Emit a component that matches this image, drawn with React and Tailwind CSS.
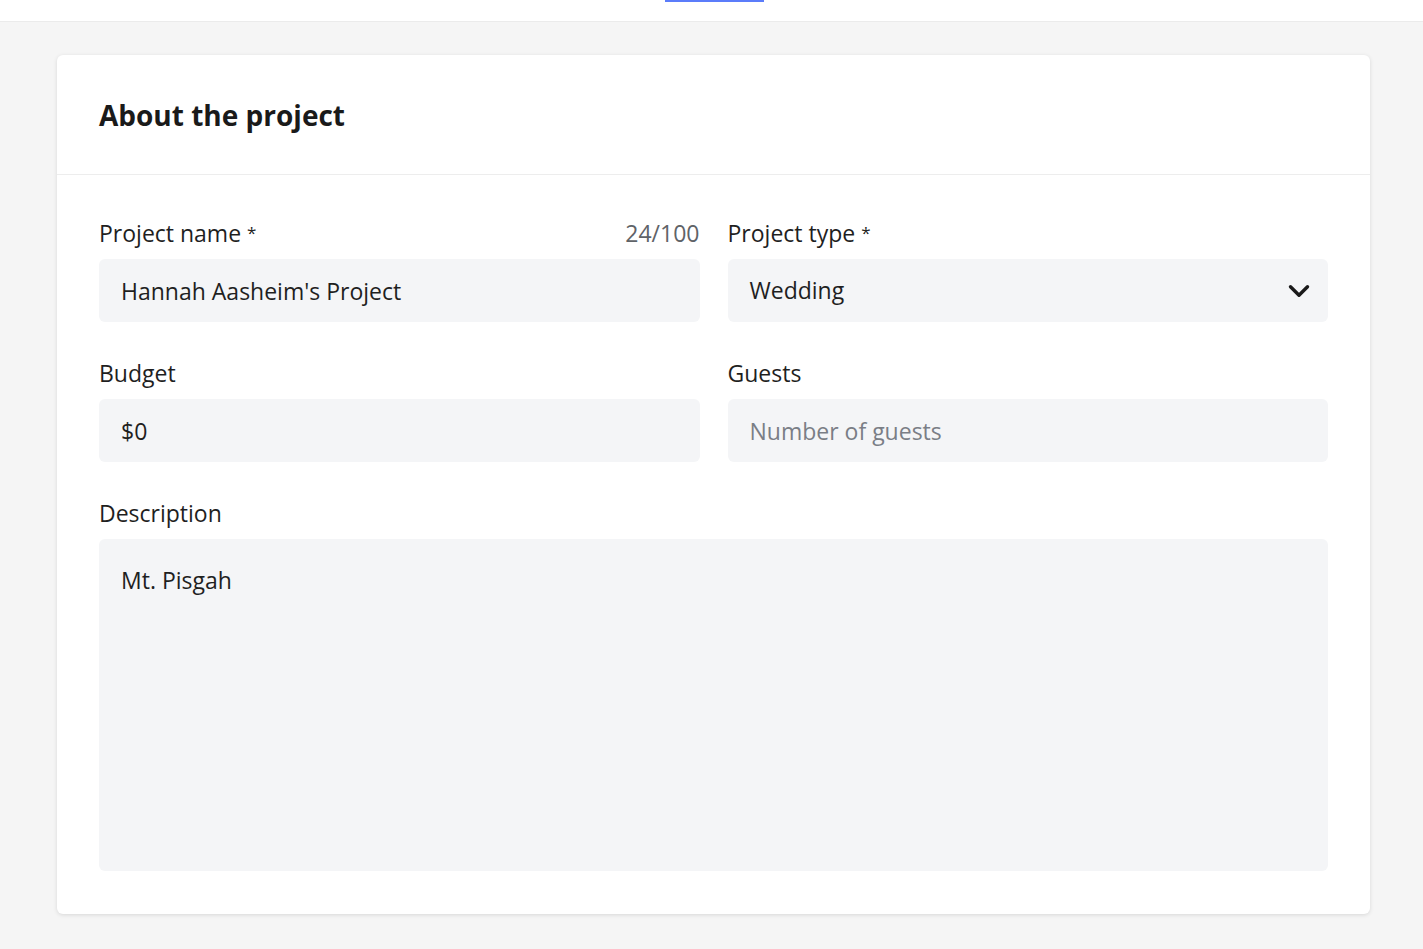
import { ChevronDown } from "lucide-react";

const Label = ({ children, required, right }) => (
  <div className="flex items-center justify-between h-7 mb-3">
    <span className="text-[23px] leading-7 text-[#1f1f1f]">
      {children}
      {required && <span className="text-[17px] align-top ml-[6px]">*</span>}
    </span>
    {right && <span className="text-[23px] leading-7 text-[#5f6368]">{right}</span>}
  </div>
);

const App = () => {
  return (
    <div className="min-h-screen bg-[#f5f5f5] font-['Open_Sans','Liberation_Sans',sans-serif]">
      {/* Top bar */}
      <div className="h-[22px] bg-white border-b border-[#ebebeb] flex justify-center">
        <div className="w-[99px] h-[2px] bg-[#5b7cfa] ml-[6px]" />
      </div>

      <div className="pl-[57px] pr-[53px] pt-[33px] pb-[35px]">
        <div className="bg-white rounded-md shadow-[0_1px_4px_rgba(0,0,0,0.12)]">
          <div className="h-[120px] px-[42px] flex items-center border-b border-[#ededed]">
            <h1 className="text-[28px] font-bold text-[#1a1a1a]">About the project</h1>
          </div>

          <div className="px-[42px] pt-[44px] pb-[43px] grid grid-cols-2 gap-x-[28px] gap-y-[37px]">
            <div>
              <Label required right="24/100">Project name</Label>
              <input
                defaultValue="Hannah Aasheim's Project"
                className="w-full h-[63px] rounded-md bg-[#f4f5f7] px-[22px] text-[23px] text-[#1f1f1f] outline-none"
              />
            </div>

            <div>
              <Label required>Project type</Label>
              <div className="w-full h-[63px] rounded-md bg-[#f4f5f7] pl-[22px] pr-[12px] flex items-center justify-between">
                <span className="text-[23px] text-[#1f1f1f]">Wedding</span>
                <ChevronDown size={34} strokeWidth={2.4} className="text-[#1a1a1a]" />
              </div>
            </div>

            <div>
              <Label>Budget</Label>
              <input
                defaultValue="$0"
                className="w-full h-[63px] rounded-md bg-[#f4f5f7] px-[22px] text-[23px] text-[#1f1f1f] outline-none"
              />
            </div>

            <div>
              <Label>Guests</Label>
              <input
                placeholder="Number of guests"
                className="w-full h-[63px] rounded-md bg-[#f4f5f7] px-[22px] text-[23px] text-[#1f1f1f] placeholder:text-[#7a7e86] outline-none"
              />
            </div>

            <div className="col-span-2">
              <Label>Description</Label>
              <textarea
                defaultValue="Mt. Pisgah"
                className="w-full h-[332px] rounded-md bg-[#f4f5f7] px-[22px] pt-[25px] text-[23px] leading-8 text-[#1f1f1f] outline-none resize-none block"
              />
            </div>
          </div>
        </div>
      </div>
    </div>
  );
};

export default App;
